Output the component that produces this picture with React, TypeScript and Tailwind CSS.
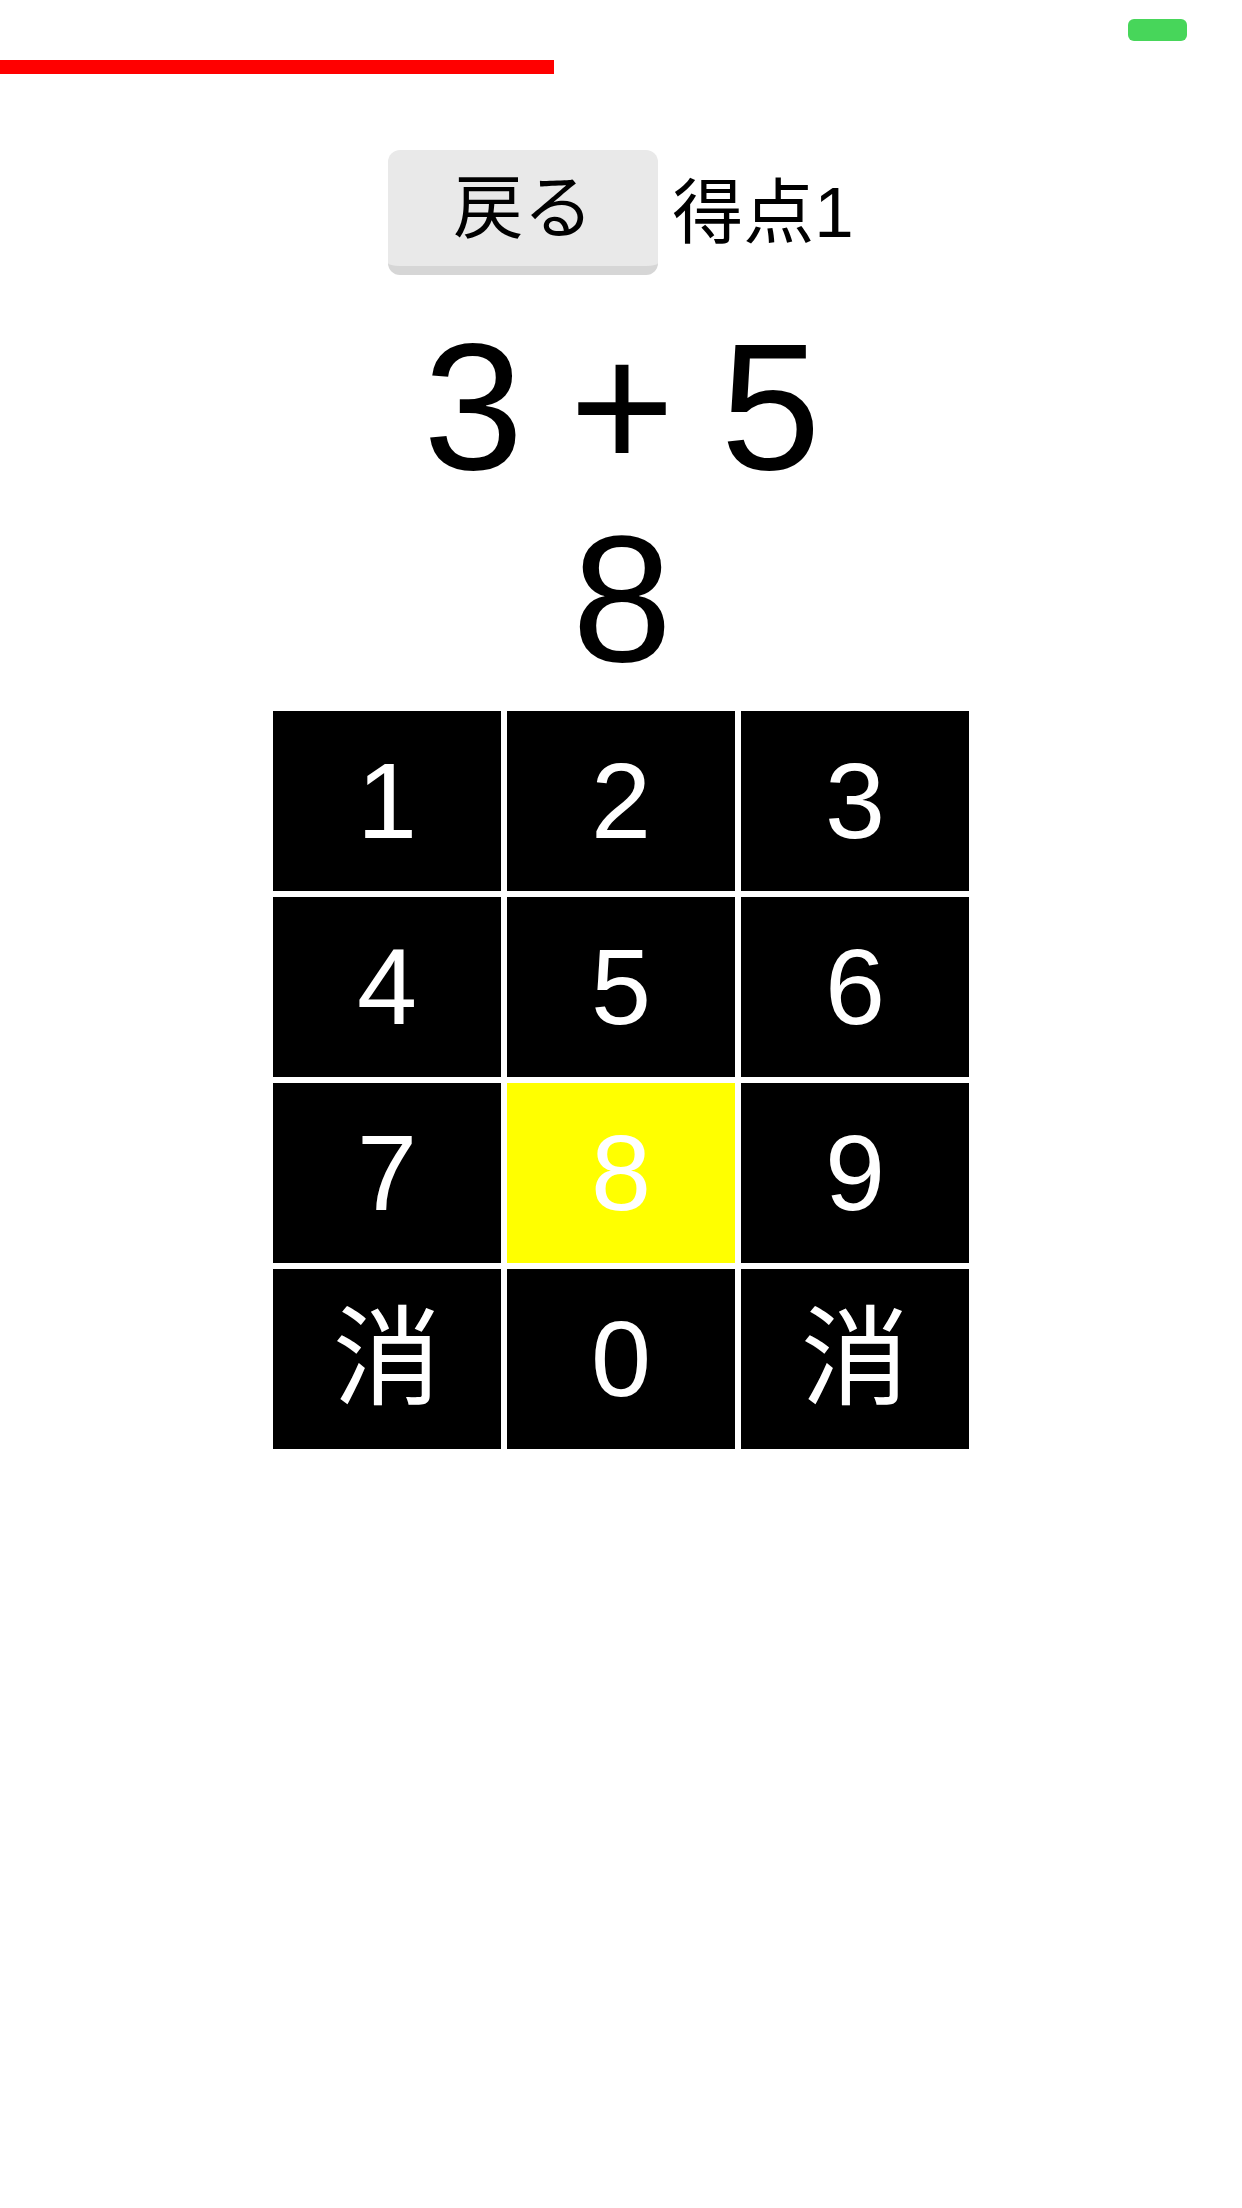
import React from "react";

const keys = ["1", "2", "3", "4", "5", "6", "7", "8", "9", "消", "0", "消"];
const selected = "8";

export default function App() {
  return (
    <div
      className="relative min-h-[2208px] w-full bg-white text-black"
      style={{ fontFamily: '"Liberation Sans", "Noto Sans CJK JP", sans-serif' }}
    >
      {/* status indicator */}
      <div className="absolute right-[55px] top-[19px] h-[22px] w-[59px] rounded-[6px] bg-[#47d65a]" />

      {/* time bar */}
      <div className="pt-[60px]">
        <div className="h-[14px] w-[554px] bg-[#ff0000]" />
      </div>

      {/* back + score */}
      <div className="mt-[76px] flex items-center justify-center gap-[14px]">
        <button className="flex h-[125px] w-[270px] items-center justify-center rounded-[12px] border-b-[9px] border-[#d6d6d6] bg-[#e9e9e9] pt-[2px] text-[70px] leading-none">
          戻る
        </button>
        <span className="text-[71px] leading-none">得点1</span>
      </div>

      {/* problem & answer */}
      <div className="mt-[36px] text-center text-[180px] leading-[192px] tracking-[-2px]">
        <div>3 + 5</div>
        <div>8</div>
      </div>

      {/* keypad */}
      <div className="mt-[16px] flex justify-center">
        <div className="grid grid-cols-[228px_228px_228px] auto-rows-[180px] gap-[6px]">
          {keys.map((k, i) => (
            <div
              key={i}
              className={
                "flex items-center justify-center text-[108px] leading-none text-white " +
                (k === selected ? "bg-[#ffff00]" : "bg-black")
              }
            >
              {k}
            </div>
          ))}
        </div>
      </div>
    </div>
  );
}
